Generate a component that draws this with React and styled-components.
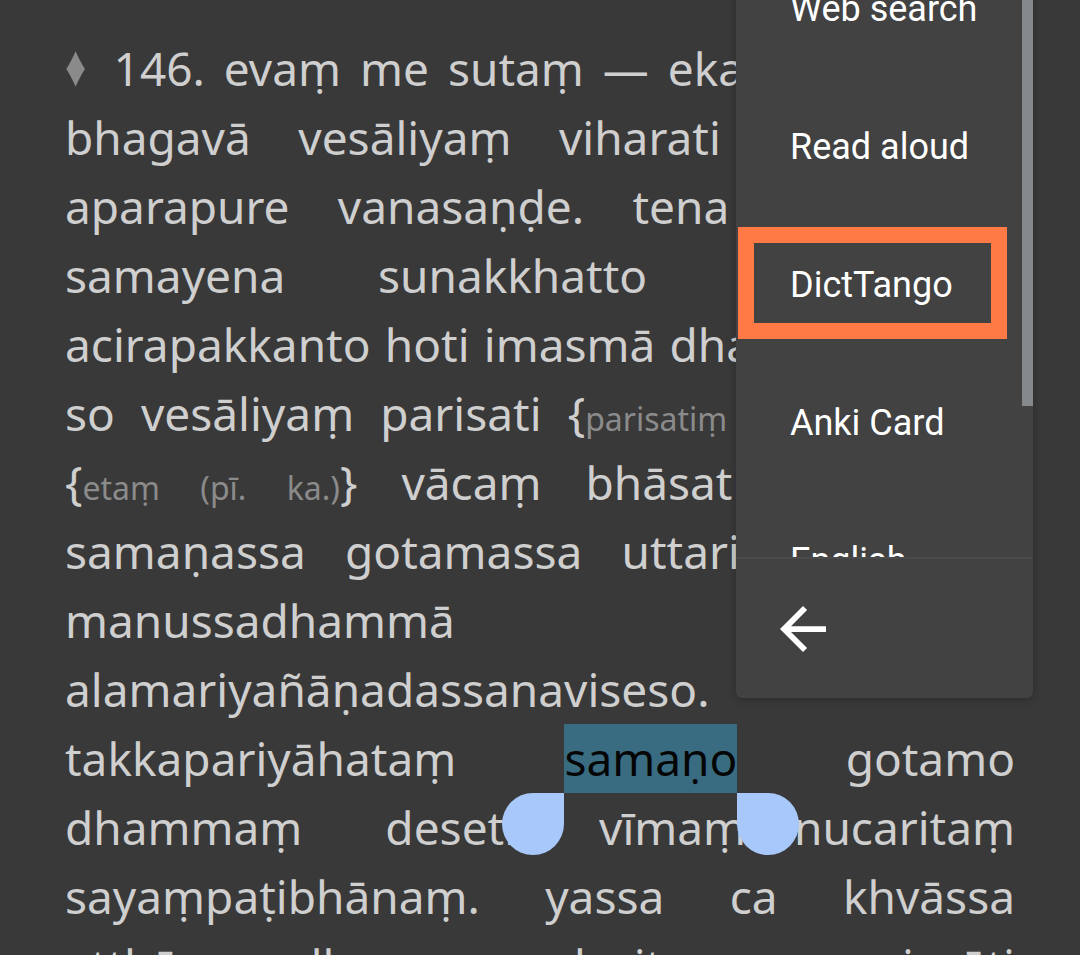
import React from 'react'
import styled, { createGlobalStyle } from 'styled-components'

const GlobalStyle = createGlobalStyle`
  html, body {
    margin: 0;
    padding: 0;
    background: #393939;
  }
  body {
    width: 1080px;
    height: 955px;
    overflow: hidden;
    position: relative;
  }
`;

const BackIcon = () => (
  <svg width="46" height="46" viewBox="4 4 16 16" fill="#ffffff">
    <path d="M20 11H7.83l5.59-5.59L12 4l-8 8 8 8 1.41-1.41L7.83 13H20v-2z" />
  </svg>
);

const App = () => {
  return (
    <>
      <GlobalStyle />
      <Reader>
        <Line><Mark>♦</Mark> 146. evaṃ me sutaṃ — ekaṃ samayaṃ</Line>
        <Line>bhagavā vesāliyaṃ viharati bahinagare</Line>
        <Line>aparapure vanasaṇḍe. tena kho pana</Line>
        <Line>samayena sunakkhatto licchaviputto</Line>
        <Line>acirapakkanto hoti imasmā dhammavinayā.</Line>
        <Line>so vesāliyaṃ parisati {'{'}<Note>parisatiṃ (sī. pī.)</Note>{'}'} etaṃ</Line>
        <Line>{'{'}<Note>etaṃ (pī. ka.)</Note>{'}'} vācaṃ bhāsati — 'natthi</Line>
        <Line>samaṇassa gotamassa uttari {'{'}<Note>uttarimanussa</Note></Line>
        <Line>manussadhammā <Note>(sī.)</Note>{'}'}</Line>
        <Line>alamariyañāṇadassanaviseso.</Line>
        <Line>
          takkapariyāhataṃ{' '}
          <Selected>
            samaṇo
            <Handle $side="left" />
            <Handle $side="right" />
          </Selected>{' '}
          gotamo
        </Line>
        <Line>dhammaṃ deseti vīmaṃsānucaritaṃ</Line>
        <Line>sayaṃpaṭibhānaṃ. yassa ca khvāssa</Line>
        <Line>atthāya dhammo desito so niyyāti</Line>
      </Reader>

      <Menu>
        <MenuScroll>
          <ScrollThumb />
          <MenuItem>Web search</MenuItem>
          <MenuItem>Read aloud</MenuItem>
          <MenuItem>
            DictTango
            <Callout />
          </MenuItem>
          <MenuItem>Anki Card</MenuItem>
          <MenuItem>English</MenuItem>
        </MenuScroll>
        <MenuFooter>
          <BackIcon />
        </MenuFooter>
      </Menu>
    </>
  )
}

export default App

const Reader = styled.div`
  width: 950px;
  padding: 34px 0 0 65px;
  font-family: "Noto Sans", "Open Sans", sans-serif;
  font-size: 46px;
  line-height: 69px;
  color: #cfcfcf;
`;

const Line = styled.div`
  height: 69px;
  text-align: justify;
  text-align-last: justify;
`;

const Mark = styled.span`
  display: inline-block;
  color: #8a8a8a;
  font-size: 58px;
  line-height: 1;
  transform: scaleX(0.72);
  transform-origin: left center;
`;

const Note = styled.span`
  font-size: 32px;
  color: #8b8b8b;
`;

const Selected = styled.span`
  position: relative;
  display: inline-block;
  height: 69px;
  background: #396c81;
  color: #050505;
`;

const Handle = styled.span`
  position: absolute;
  top: 100%;
  width: 62px;
  height: 62px;
  background: #a8c7fa;
  ${({ $side }) => $side === 'left'
    ? 'right: 100%; border-radius: 50% 0 50% 50%;'
    : 'left: 100%; border-radius: 0 50% 50% 50%;'}
`;

const Menu = styled.div`
  position: absolute;
  left: 736px;
  top: -60px;
  width: 297px;
  background: #424242;
  border-radius: 0 0 6px 6px;
  box-shadow: 0 2px 8px rgba(0, 0, 0, 0.25);
  font-family: Roboto, "Noto Sans", sans-serif;
  color: #ffffff;
`;

const MenuScroll = styled.div`
  position: relative;
  height: 617px;
  overflow: hidden;
  border-bottom: 2px solid #4a4a4a;
`;

const ScrollThumb = styled.div`
  position: absolute;
  top: 0;
  right: 0;
  width: 11px;
  height: 466px;
  background: #85898c;
  z-index: 1;
`;

const MenuItem = styled.div`
  position: relative;
  height: 138px;
  display: flex;
  align-items: center;
  padding-left: 54px;
  font-size: 36px;
`;

const Callout = styled.div`
  position: absolute;
  left: 2px;
  top: 11px;
  width: 269px;
  height: 112px;
  box-sizing: border-box;
  border: 16px solid #ff7a45;
`;

const MenuFooter = styled.div`
  height: 139px;
  display: flex;
  align-items: center;
  padding-left: 44px;
`;
